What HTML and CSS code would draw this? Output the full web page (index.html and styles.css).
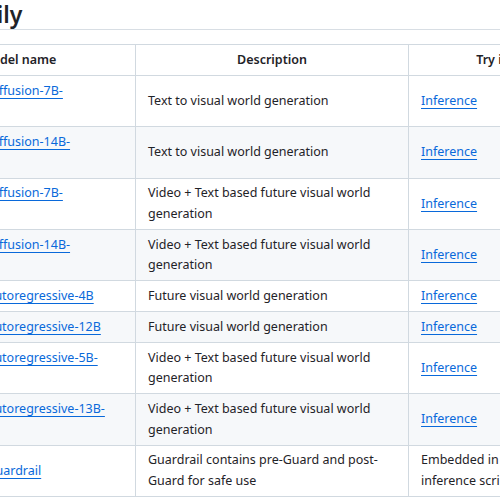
FILE: index.html
```html
<!DOCTYPE html>
<html lang="en">
<head>
<meta charset="utf-8">
<title>Model Family</title>
<link rel="stylesheet" href="styles.css">
</head>
<body>
<div class="viewport">
  <div class="content">
    <h2 class="section-title">Model Family</h2>
    <table class="models">
      <colgroup>
        <col class="col-name">
        <col class="col-desc">
        <col class="col-try">
      </colgroup>
      <thead>
        <tr><th>Model name</th><th>Description</th><th>Try it out</th></tr>
      </thead>
      <tbody>
        <tr><td><a href="#">Cosmos-1.0-Diffusion-7B-Text2World</a></td><td>Text to visual world generation</td><td><a href="#">Inference</a></td></tr>
        <tr><td><a href="#">Cosmos-1.0-Diffusion-14B-Text2World</a></td><td>Text to visual world generation</td><td><a href="#">Inference</a></td></tr>
        <tr><td><a href="#">Cosmos-1.0-Diffusion-7B-Video2World</a></td><td>Video + Text based future visual world generation</td><td><a href="#">Inference</a></td></tr>
        <tr><td><a href="#">Cosmos-1.0-Diffusion-14B-Video2World</a></td><td>Video + Text based future visual world generation</td><td><a href="#">Inference</a></td></tr>
        <tr><td><a href="#">Cosmos-1.0-Autoregressive-4B</a></td><td>Future visual world generation</td><td><a href="#">Inference</a></td></tr>
        <tr><td><a href="#">Cosmos-1.0-Autoregressive-12B</a></td><td>Future visual world generation</td><td><a href="#">Inference</a></td></tr>
        <tr><td><a href="#">Cosmos-1.0-Autoregressive-5B-Video2World</a></td><td>Video + Text based future visual world generation</td><td><a href="#">Inference</a></td></tr>
        <tr><td><a href="#">Cosmos-1.0-Autoregressive-13B-Video2World</a></td><td>Video + Text based future visual world generation</td><td><a href="#">Inference</a></td></tr>
        <tr><td><a href="#">Cosmos-1.0-Guardrail</a></td><td>Guardrail contains pre-Guard and post-Guard for safe use</td><td>Embedded in model<br>inference scripts</td></tr>
      </tbody>
    </table>
  </div>
</div>
</body>
</html>
```
FILE: styles.css
```css
html, body {
  margin: 0;
  padding: 0;
  background: #ffffff;
}

body {
  font-family: "Noto Sans", "Open Sans", sans-serif;
  color: #1f2328;
}

.viewport {
  width: 500px;
  height: 500px;
  overflow: hidden;
}

.content {
  width: 900px;
  margin-left: -99px;
}

.section-title {
  margin: 0 0 14px 0;
  padding: 0;
  text-indent: -28px;
  font-size: 23px;
  line-height: 29px;
  font-weight: 600;
  border-bottom: 1px solid #d8dee4;
}

.models {
  border-collapse: collapse;
  table-layout: fixed;
  font-size: 12.5px;
  line-height: 20.3px;
}

.col-name { width: 234px; }
.col-desc { width: 273px; }
.col-try { width: 190px; }

.models th,
.models td {
  border: 1px solid #d1d9e0;
  padding: 4.85px 12px;
  vertical-align: middle;
}

.models th {
  font-weight: 600;
  text-align: center;
}

.models td {
  text-align: left;
}

.models tbody tr:nth-child(2n) {
  background: #f6f8fa;
}

.models a {
  color: #0969da;
  text-decoration: underline;
  text-underline-offset: 0.2em;
}
```
